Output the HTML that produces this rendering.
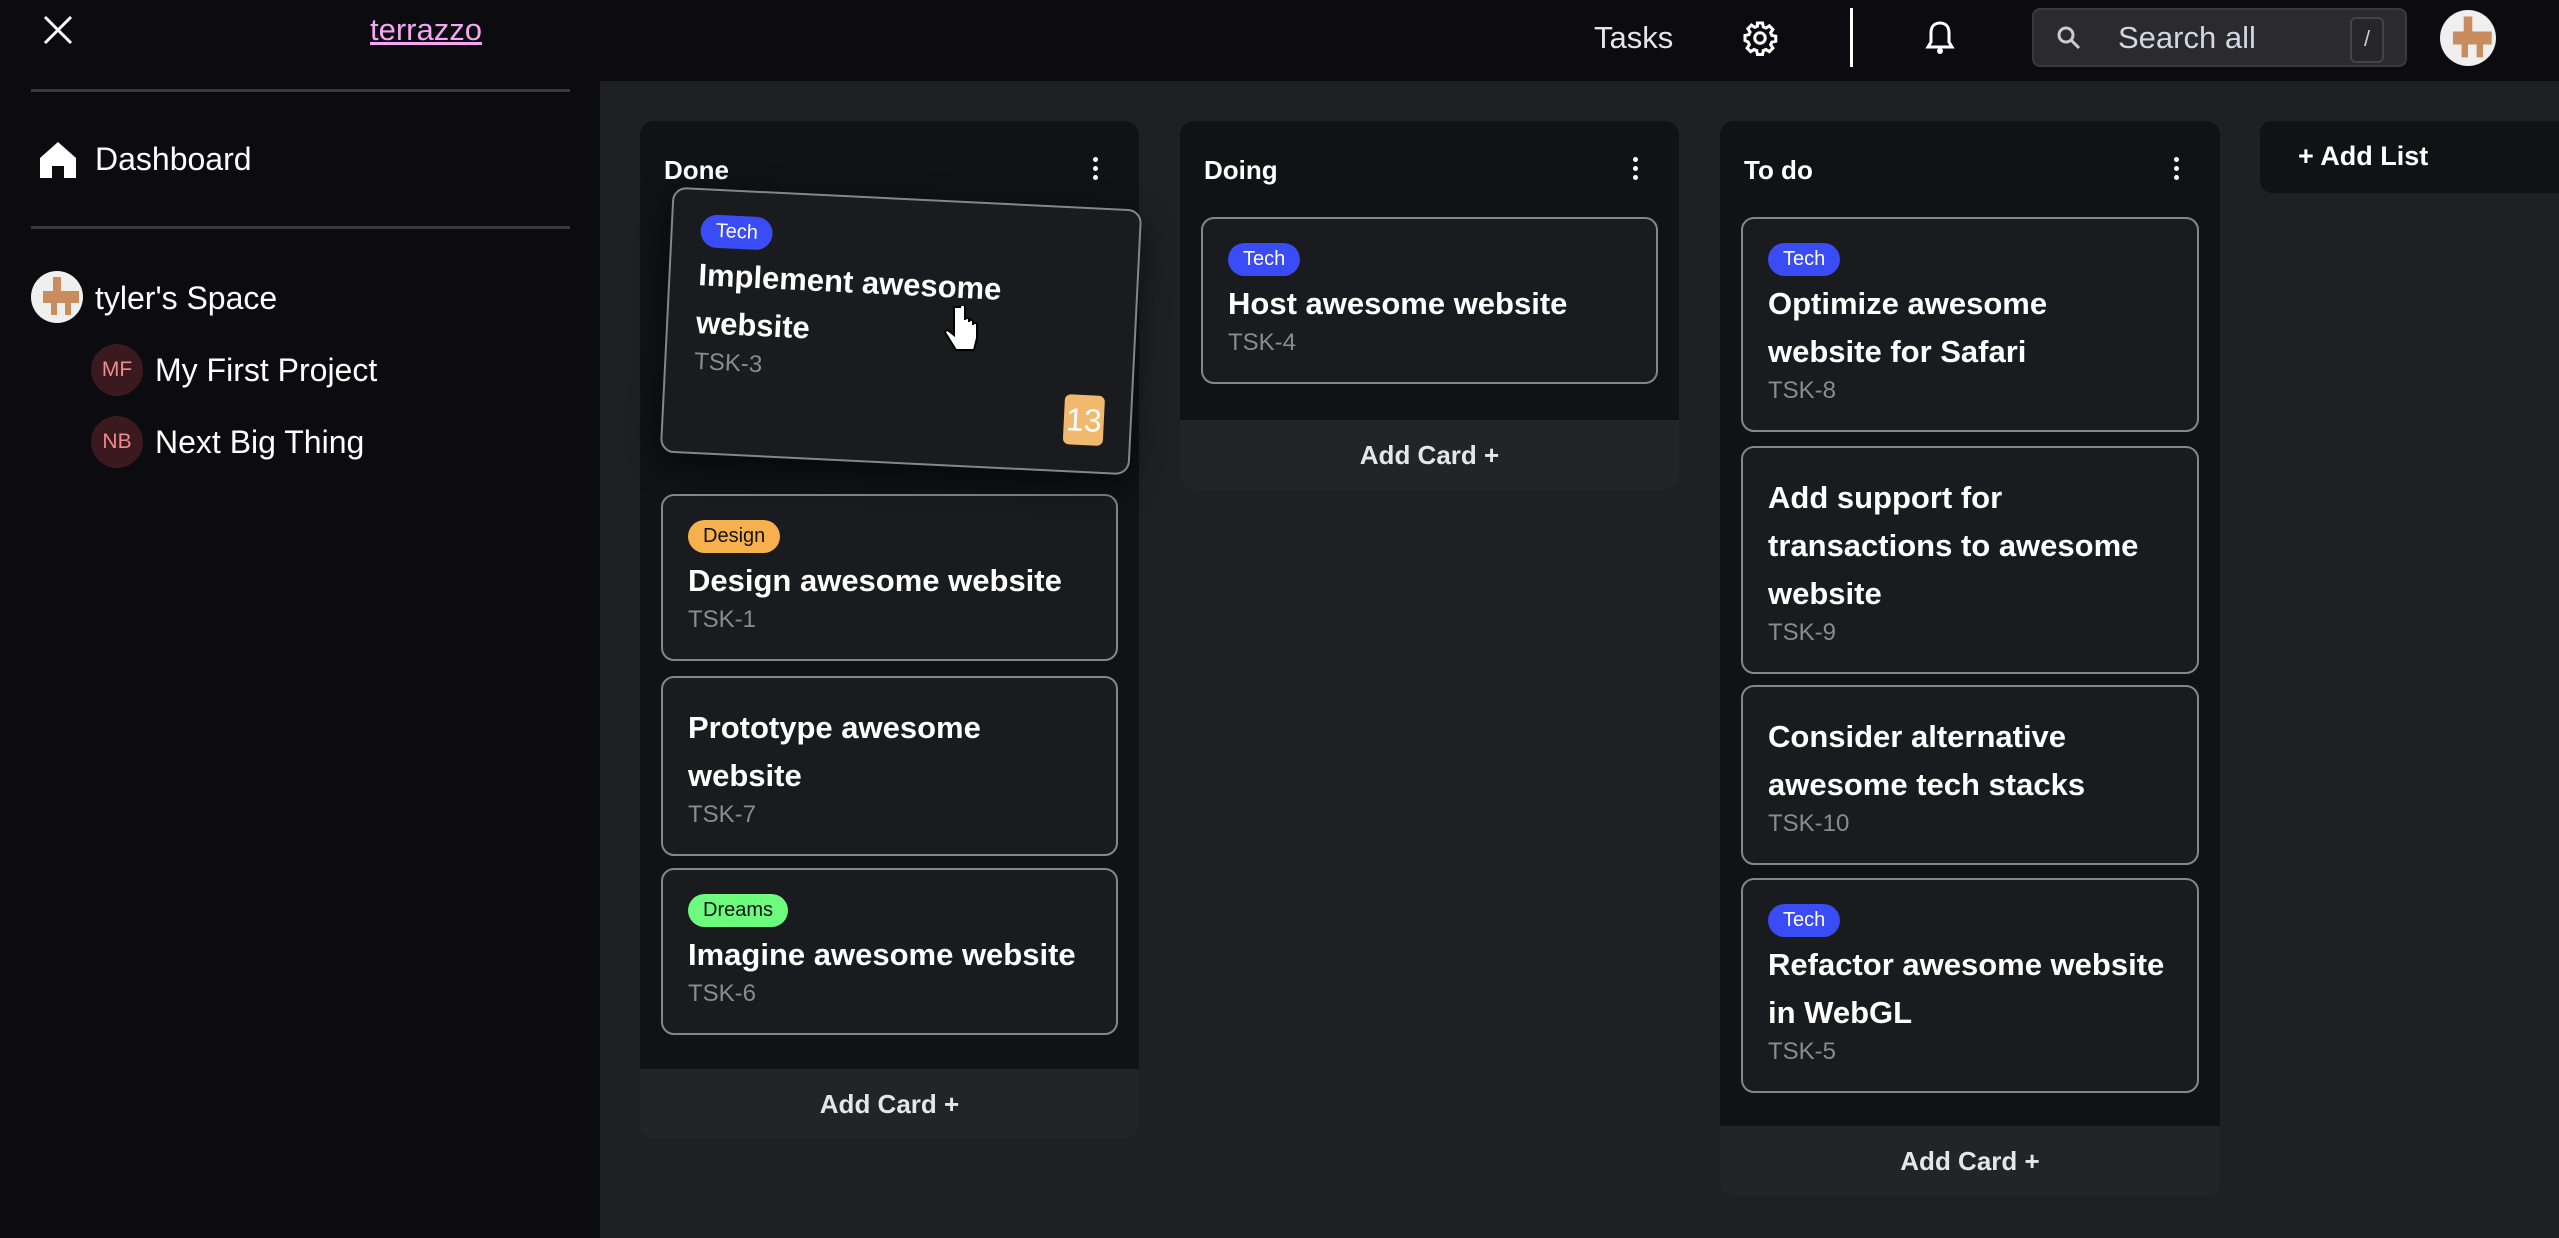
<!DOCTYPE html>
<html><head><meta charset="utf-8"><style>
*{box-sizing:border-box;margin:0;padding:0}
body{width:2559px;height:1238px;overflow:hidden;background:#1e2023;font-family:"Liberation Sans",sans-serif;color:#fff;position:relative}
.abs{position:absolute}
#top{left:0;top:0;width:2559px;height:81px;background:#0c0c10}
#side{left:0;top:0;width:600px;height:1238px;background:#0c0c10}
.hr{position:absolute;left:31px;width:539px;height:3px;background:#3a3a3e}
.list{position:absolute;background:#111214;border-radius:14px;overflow:hidden}
.lt{position:absolute;left:24px;top:34px;font-size:26px;font-weight:bold}
.dots{position:absolute;right:40px;top:36px;width:6px}
.dots i{display:block;width:5px;height:5px;border-radius:50%;background:#fff;margin-bottom:4px}
.card{position:absolute;left:21px;right:21px;background:#1a1b1e;border:2px solid #85868a;border-radius:13px;padding:24px 25px}
.tag{display:inline-block;height:33px;line-height:33px;padding:0 15px;border-radius:17px;font-size:20px;margin-bottom:4px}
.tech{background:#3a4cf5;color:#fff}
.design{background:#f6b04e;color:#111}
.dreams{background:#6cfb7c;color:#111}
.tt{font-size:31px;font-weight:bold;line-height:48px}
.id{font-size:24px;color:#8a8b8f;line-height:30px}
.foot{position:absolute;left:0;right:0;bottom:0;height:70px;background:#232427;text-align:center;line-height:70px;font-size:26px;font-weight:bold;color:#e4e6ea}
.av{position:absolute;border-radius:50%;background:#efefef;overflow:hidden}
.mini{position:absolute;width:52px;height:52px;border-radius:50%;background:#3a1a1e;color:#f28a8a;font-size:21px;text-align:center;line-height:52px}
.nav{position:absolute;font-size:32px;color:#fff}
</style></head><body>
<div id="side" class="abs"></div>
<div id="top" class="abs"></div>
<svg class="abs" style="left:42px;top:14px" width="32" height="32" viewBox="0 0 32 32"><path d="M3 3L29 29M29 3L3 29" stroke="#fff" stroke-width="3"/></svg>
<div class="abs" style="left:370px;top:12px;font-size:31px;color:#f3a6f3;text-decoration:underline">terrazzo</div>
<div class="hr" style="top:89px"></div>
<div class="hr" style="top:226px"></div>
<svg class="abs" style="left:38px;top:140px" width="40" height="40" viewBox="0 0 40 40"><path d="M20 2L38 18V38H26V26H14V38H2V18Z" fill="#fff"/></svg>
<div class="nav" style="left:95px;top:141px">Dashboard</div>
<div class="av" style="left:31px;top:271px;width:52px;height:52px"><svg width="52" height="52" viewBox="0 0 52 52"><path d="M22 6h8v14h18v12h-8v12h-6V32h-8v12h-6V32h-8V20h10z" fill="#c98c5e"/></svg></div>
<div class="nav" style="left:95px;top:280px">tyler's Space</div>
<div class="mini" style="left:91px;top:344px">MF</div>
<div class="nav" style="left:155px;top:352px">My First Project</div>
<div class="mini" style="left:91px;top:416px">NB</div>
<div class="nav" style="left:155px;top:424px">Next Big Thing</div>

<div class="abs" style="left:1594px;top:20px;font-size:31px;color:#e6e6e6">Tasks</div>
<svg class="abs" style="left:1742px;top:20px" width="36" height="36" viewBox="0 0 24 24"><path fill="none" stroke="#fff" stroke-width="2" d="M12 8.5a3.5 3.5 0 1 0 0 7a3.5 3.5 0 1 0 0-7zM10.3 2h3.4l.5 2.6 1.8.8 2.2-1.5 2.4 2.4-1.5 2.2.8 1.8 2.6.5v3.4l-2.6.5-.8 1.8 1.5 2.2-2.4 2.4-2.2-1.5-1.8.8-.5 2.6h-3.4l-.5-2.6-1.8-.8-2.2 1.5-2.4-2.4 1.5-2.2-.8-1.8L2 13.7v-3.4l2.6-.5.8-1.8-1.5-2.2 2.4-2.4 2.2 1.5 1.8-.8z"/></svg>
<div class="abs" style="left:1850px;top:8px;width:3px;height:59px;background:#fff"></div>
<svg class="abs" style="left:1924px;top:20px" width="32" height="36" viewBox="0 0 32 36"><path d="M16 3c-6 0-9 4-9 10v9l-3 5h24l-3-5v-9c0-6-3-10-9-10z" fill="none" stroke="#fff" stroke-width="3"/><circle cx="16" cy="31" r="3" fill="#fff"/></svg>
<div class="abs" style="left:2032px;top:8px;width:375px;height:59px;background:#2b2b2d;border:2px solid #3a3a3c;border-radius:8px"></div>
<svg class="abs" style="left:2056px;top:25px" width="26" height="26" viewBox="0 0 26 26"><circle cx="10" cy="10" r="7" fill="none" stroke="#ccc" stroke-width="3"/><path d="M15 15l8 8" stroke="#ccc" stroke-width="3"/></svg>
<div class="abs" style="left:2118px;top:20px;font-size:31px;color:#cfd8e3">Search all</div>
<div class="abs" style="left:2350px;top:17px;width:34px;height:46px;border:2px solid #444;border-radius:6px;background:#262628;color:#ccc;font-size:22px;text-align:center;line-height:40px">/</div>
<div class="av" style="left:2440px;top:10px;width:56px;height:56px"><svg width="56" height="56" viewBox="0 0 52 52"><path d="M22 6h8v14h18v12h-8v12h-6V32h-8v12h-6V32h-8V20h10z" fill="#c98c5e"/></svg></div>

<!-- Done -->
<div class="list" style="left:640px;top:121px;width:499px;height:1018px">
 <div class="lt">Done</div><div class="dots"><i></i><i></i><i></i></div>
 <div class="card" style="top:373px"><span class="tag design">Design</span><div class="tt">Design awesome website</div><div class="id">TSK-1</div></div>
 <div class="card" style="top:555px;padding-top:26px"><div class="tt">Prototype awesome website</div><div class="id">TSK-7</div></div>
 <div class="card" style="top:747px"><span class="tag dreams">Dreams</span><div class="tt">Imagine awesome website</div><div class="id">TSK-6</div></div>
 <div class="foot">Add Card +</div>
</div>
<!-- Doing -->
<div class="list" style="left:1180px;top:121px;width:499px;height:369px">
 <div class="lt">Doing</div><div class="dots"><i></i><i></i><i></i></div>
 <div class="card" style="top:96px"><span class="tag tech">Tech</span><div class="tt">Host awesome website</div><div class="id">TSK-4</div></div>
 <div class="foot">Add Card +</div>
</div>
<!-- To do -->
<div class="list" style="left:1720px;top:121px;width:500px;height:1075px">
 <div class="lt">To do</div><div class="dots"><i></i><i></i><i></i></div>
 <div class="card" style="top:96px"><span class="tag tech">Tech</span><div class="tt">Optimize awesome<br>website for Safari</div><div class="id">TSK-8</div></div>
 <div class="card" style="top:325px;padding-top:26px"><div class="tt">Add support for transactions to awesome website</div><div class="id">TSK-9</div></div>
 <div class="card" style="top:564px;padding-top:26px"><div class="tt">Consider alternative awesome tech stacks</div><div class="id">TSK-10</div></div>
 <div class="card" style="top:757px"><span class="tag tech">Tech</span><div class="tt">Refactor awesome website in WebGL</div><div class="id">TSK-5</div></div>
 <div class="foot">Add Card +</div>
</div>
<div class="list" style="left:2260px;top:121px;width:320px;height:72px;border-radius:12px"><div class="abs" style="left:38px;top:20px;font-size:27px;font-weight:bold">+ Add List</div></div>

<!-- dragged card -->
<div class="abs" style="left:666px;top:198px;width:470px;height:266px;transform:rotate(2.8deg);background:#1a1b1e;border:2px solid #85868a;border-radius:14px;padding:24px 28px;box-shadow:0 10px 30px rgba(0,0,0,.6)">
 <span class="tag tech">Tech</span><div class="tt">Implement awesome website</div><div class="id">TSK-3</div>
 <div class="abs" style="right:26px;bottom:26px;width:40px;height:50px;background:#f0b96e;border-radius:6px;color:#fff;font-size:32px;text-align:center;line-height:50px">13</div>
</div>
<svg class="abs" style="left:944px;top:305px" width="36" height="50" viewBox="0 0 36 50"><path d="M10 2v28l-5-4c-3-2-5 1-3 3l10 16h18l3-12V20c0-3-4-3-4 0v-3c0-3-4-3-4 0v-2c0-3-4-3-4 0V2c0-3-5-3-5 0z" fill="#fff" stroke="#000" stroke-width="2"/></svg>
</body></html>
